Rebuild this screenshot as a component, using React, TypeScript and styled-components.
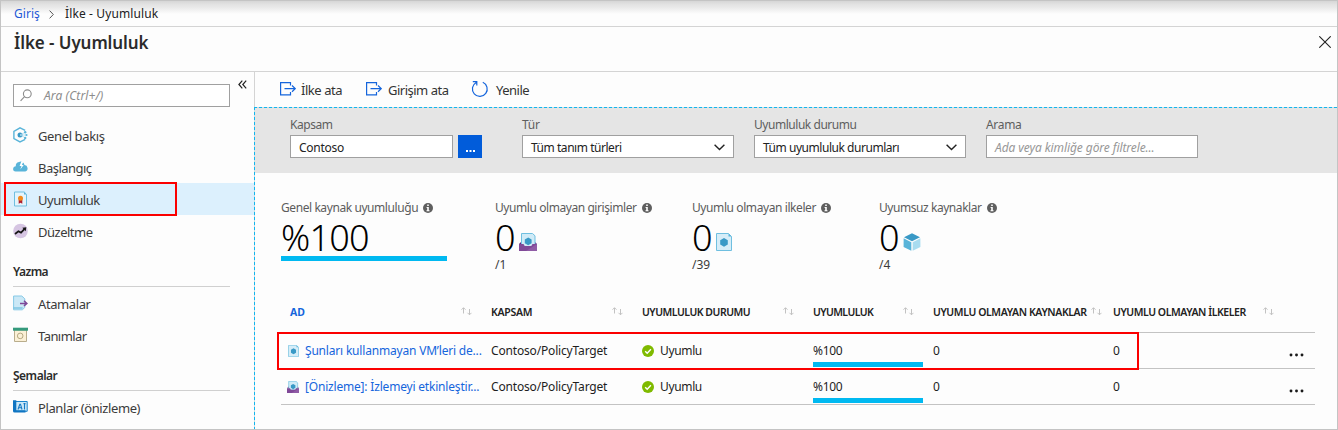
import React from 'react';
import styled, { createGlobalStyle, css } from 'styled-components';

const GlobalStyle = createGlobalStyle`
  *, *::before, *::after { box-sizing: border-box; }
  body { margin: 0; background: #fdfdfd; font-family: "Noto Sans", "Open Sans", sans-serif; font-size: 12px; color: #333; }
  svg { display: block; flex: none; }
`;

const Page = styled.div`
  width: 1338px;
  height: 430px;
  border: 1px solid #c4c4c4;
  background: #fdfdfd;
  display: flex;
  flex-direction: column;
  overflow: hidden;
`;

const Text = styled.span<{ $ls?: number }>`
  letter-spacing: ${(p) => p.$ls ?? 0}px;
  white-space: nowrap;
`;

const Breadcrumb = styled.nav`
  height: 26px;
  flex: none;
  display: flex;
  align-items: center;
  padding: 1px 0 0 13px;
  border-bottom: 1px solid #d4d4d4;
  background: linear-gradient(#d6d6d6, #e4e4e4 4px, #e8e8e8 6px, #fdfdfd 13px);
  line-height: 24px;
`;
const Home = styled(Text)`
  color: #1f59d6;
  width: 35px;
`;
const Crumb = styled(Text)`
  padding-left: 11px;
  color: #222;
`;

const TitleBar = styled.header`
  height: 45px;
  flex: none;
  display: flex;
  justify-content: space-between;
  padding: 4px 6px 0 13px;
  border-bottom: 1px solid #d4d4d4;
`;
const Title = styled.h1`
  margin: 0;
  font-size: 17px;
  font-weight: 600;
  line-height: 24px;
  letter-spacing: -0.08px;
  color: #2b2b2b;
`;
const CloseButton = styled.div`
  padding-top: 5px;
`;

const Body = styled.div`
  flex: 1;
  display: flex;
  min-height: 0;
`;

const Sidebar = styled.aside`
  width: 253px;
  flex: none;
  display: flex;
  flex-direction: column;
`;
const SearchRow = styled.div`
  display: flex;
  height: 47px;
  flex: none;
  padding: 12px 0 0 12px;
`;
const inputBox = css`
  height: 23px;
  border: 1px solid #a0a0a0;
  background: #fff;
  display: flex;
  align-items: center;
`;
const SearchBox = styled.div`
  ${inputBox}
  width: 217px;
  padding: 0 0 0 6px;
  gap: 12px;
  font-style: italic;
  color: #8c8c8c;
`;
const Collapse = styled.div`
  padding: 0 0 0 8px;
  margin-top: -4px;
`;
const NavItem = styled.div<{ $active?: boolean }>`
  position: relative;
  height: 32px;
  flex: none;
  display: flex;
  align-items: center;
  gap: 9px;
  padding: 2px 0 0 12px;
  font-size: 13px;
  color: #3b3b3b;
  background: ${(p) => (p.$active ? '#dcf0fd' : 'transparent')};
`;
const NavIcon = styled.span`
  width: 16px;
  height: 16px;
  flex: none;
  margin-top: -2px;
`;
const NavHeading = styled.div`
  flex: none;
  height: 40px;
  margin: 0 24px 0 12px;
  padding-top: 15px;
  line-height: 20px;
  font-weight: 600;
  color: #2b2b2b;
  border-bottom: 1px solid #d0d0d0;
`;
const Highlight = styled.div<{ $l: number; $t: number; $w: number; $h: number }>`
  position: absolute;
  left: ${(p) => p.$l}px;
  top: ${(p) => p.$t}px;
  width: ${(p) => p.$w}px;
  height: ${(p) => p.$h}px;
  border: 2px solid #fb0000;
  z-index: 2;
`;

const Main = styled.main`
  flex: 1;
  min-width: 0;
  display: flex;
  flex-direction: column;
`;
const Toolbar = styled.div`
  height: 35px;
  flex: none;
  display: flex;
  padding: 8px 0 0 25px;
  border-left: 1px solid #d4d4d4;
`;
const ToolButton = styled.div<{ $w: number; $gap?: number }>`
  width: ${(p) => p.$w}px;
  height: 20px;
  display: flex;
  gap: ${(p) => p.$gap ?? 5}px;
  font-size: 13px;
  line-height: 21px;
  color: #333;
`;
const Content = styled.section`
  flex: 1;
  padding: 1px 0 0 1px;
  background:
    repeating-linear-gradient(90deg, #12b6ee 0 3px, #c9dbe2 3px 5px) top / 100% 1px no-repeat,
    repeating-linear-gradient(180deg, #12b6ee 0 3px, #c9dbe2 3px 5px) left / 1px 100% no-repeat;
`;
const Filters = styled.div`
  height: 65px;
  display: flex;
  align-items: flex-start;
  padding: 7px 0 0 35px;
  background: #e5e5e5;
`;
const Field = styled.div<{ $mr: number }>`
  display: flex;
  flex-direction: column;
  margin-right: ${(p) => p.$mr}px;
`;
const FieldLabel = styled(Text)`
  height: 20px;
  line-height: 20px;
  color: #5e5e5e;
`;
const FieldLine = styled.div`
  display: flex;
  gap: 5px;
`;
const Input = styled.div<{ $w: number; $hint?: boolean }>`
  ${inputBox}
  width: ${(p) => p.$w}px;
  justify-content: space-between;
  padding: 1px 8px 0 8px;
  color: ${(p) => (p.$hint ? '#979797' : '#222')};
  font-style: ${(p) => (p.$hint ? 'italic' : 'normal')};
`;
const MoreButton = styled.div`
  width: 24px;
  height: 23px;
  background: #015cda;
  display: flex;
  align-items: flex-end;
  justify-content: center;
  padding-bottom: 6px;
`;

const Kpis = styled.div`
  display: flex;
  height: 122px;
  padding: 25px 0 0 26px;
`;
const Kpi = styled.div<{ $w: number }>`
  width: ${(p) => p.$w}px;
  display: flex;
  flex-direction: column;
`;
const KpiLabel = styled.div`
  display: flex;
  gap: 5px;
  height: 19px;
  line-height: 20px;
  color: #5c5c5c;
  svg { margin-top: 5px; }
`;
const KpiValue = styled.div`
  display: flex;
  align-items: flex-end;
  height: 39px;
  color: #000;
  font-size: 36px;
  font-weight: 300;
  line-height: 42px;
  svg { margin-bottom: 5px; }
`;
const KpiNumber = styled(Text)<{ $w: number }>`
  width: ${(p) => p.$w}px;
  height: 39px;
`;
const KpiTotal = styled(Text)`
  line-height: 20px;
  margin-top: -1px;
  color: #3b3b3b;
`;
const Bar = styled.div<{ $w: number }>`
  width: ${(p) => p.$w}px;
  height: 5px;
  flex: none;
  background: #00b9f1;
`;

const Table = styled.div`
  margin: 0 22px 0 26px;
`;
const TableRow = styled.div`
  position: relative;
  display: grid;
  grid-template-columns: 210px 151px 171px 120px 180px 1fr;
  height: 36px;
  border-bottom: 1px solid #c3c3c3;
  color: #1e1e1e;
`;
const TableHead = styled(TableRow)`
  height: 38px;
  font-size: 10.5px;
  font-weight: 600;
`;
const HeadCell = styled.div<{ $gap: number; $link?: boolean }>`
  display: flex;
  justify-content: space-between;
  padding: 7px ${(p) => p.$gap}px 0 ${(p) => (p.$link ? 9 : 0)}px;
  line-height: 20px;
  color: ${(p) => (p.$link ? '#1565dc' : '#222')};
  font-weight: ${(p) => (p.$link ? 700 : 600)};
  svg { margin-top: 5px; }
`;
const Cell = styled.div<{ $pl?: number; $gap?: number }>`
  display: flex;
  gap: ${(p) => p.$gap ?? 0}px;
  padding: 8px 0 0 ${(p) => p.$pl ?? 0}px;
  line-height: 20px;
`;
const Link = styled(Text)`
  color: #1565dc;
`;
const IconSlot = styled.span<{ $top: number }>`
  padding-top: ${(p) => p.$top}px;
`;
const BarCell = styled.div`
  display: flex;
  flex-direction: column;
  justify-content: space-between;
  padding: 8px 0 1px;
  line-height: 20px;
`;
const LastCell = styled(Cell)`
  justify-content: space-between;
  padding-right: 11px;
`;

const PolicyIcon = ({ w, h }: { w: number; h: number }) => (
  <svg width={w} height={h} viewBox="0 0 16 18">
    <path d="M.5.5h12l3 3v14H.5z" fill="#d6edf8" stroke="#6fbfe0" />
    <path d="M12.5.5v3h3z" fill="#59b4d9" />
    <path d="M8 5l3.8 2.2v4.3L8 13.700l-3.800-2.200V7.200z" fill="#3999c6" />
  </svg>
);
const InitiativeIcon = ({ w, h }: { w: number; h: number }) => (
  <svg width={w} height={h} viewBox="0 0 18 18">
    <path d="M0 11l3-3h12l3 3z" fill="#68217a" />
    <path d="M2.500.5h11l2.500 2.300v10.700h-13.500z" fill="#d0ebf7" stroke="#6fbfe0" />
    <path d="M9.200 4.500l3.400 2v3.800l-3.400 2-3.400-2V6.500z" fill="#3999c6" />
    <path d="M0 11h4.500l1.200 2h6.600l1.200-2H18v7H0z" fill="#804998" />
    <path d="M18 11v7H7z" fill="#a374b8" opacity=".45" />
  </svg>
);
const CubeIcon = () => (
  <svg width="18" height="18" viewBox="0 0 18 18">
    <path d="M9 .2l8 4.100-8 4-8-4z" fill="#3999c6" />
    <path d="M.6 5.300l7.700 3.900v8.600L.6 14z" fill="#59b4d9" />
    <path d="M17.400 5.300L9.700 9.200v8.600l7.700-3.800z" fill="#a8dcf0" />
  </svg>
);
const InfoIcon = () => (
  <svg width="10" height="10" viewBox="0 0 10 10">
    <circle cx="5" cy="5" r="5" fill="#5f5f5f" />
    <path d="M4.200 1.600h1.600v1.400H4.200zM3.600 4h2.200v3.200h.7v1H3.500v-1h.7V5h-.6z" fill="#fff" />
  </svg>
);
const CheckIcon = () => (
  <svg width="12" height="12" viewBox="0 0 12 12">
    <circle cx="6" cy="6" r="6" fill="#7fba00" />
    <path d="M3.200 6.200l2 2 3.700-4" fill="none" stroke="#fff" strokeWidth="1.400" />
  </svg>
);
const SortIcon = () => (
  <svg width="11" height="10" viewBox="0 0 11 10" fill="none" stroke="#c2c2c2">
    <path d="M2.500 6.500V.9M.5 2.700l2-2 2 2M8.500 2v5.800M6.500 5.800l2 2 2-2" />
  </svg>
);
const DotsIcon = () => (
  <svg width="15" height="4" viewBox="0 0 15 4" fill="#1a1a1a">
    <circle cx="2" cy="2" r="1.450" />
    <circle cx="7.500" cy="2" r="1.450" />
    <circle cx="13" cy="2" r="1.450" />
  </svg>
);
const ChevronDown = () => (
  <svg width="11" height="7" viewBox="0 0 11 7" fill="none" stroke="#222" strokeWidth="1.400">
    <path d="M.6.700l4.900 4.900L10.400.7" />
  </svg>
);
const AssignIcon = () => (
  <svg width="16" height="14" viewBox="0 0 16 14" fill="none" stroke="#1565dc" strokeWidth="1.200">
    <path d="M10.500 3.500V.6H.6v12.300h9.900V10M4.500 6.600h10.700M12 3.500l3.200 3.100L12 9.700" />
  </svg>
);
const RefreshIcon = () => (
  <svg width="18" height="18" viewBox="0 0 18 18" fill="none" stroke="#1565dc" strokeWidth="1.200">
    <path d="M11.800 2.200a7.400 7.400 0 1 1-6.600.3M1.800 1.600h4v4" />
  </svg>
);

const OverviewIcon = () => (
  <svg width="15" height="16" viewBox="0 0 15 16">
    <path d="M12.200 3.300L7 .9.900 4.300v7.200L7 14.900l5.200-2.500" fill="none" stroke="#59b4d9" strokeWidth="1.400" />
    <circle cx="7" cy="8" r="2.500" fill="#3999c6" />
    <path d="M7 8l5-2.700M7 8h6M7 8l5 2.700" stroke="#a8d8ee" strokeWidth=".8" />
    <g fill="#59b4d9"><circle cx="12.200" cy="5.200" r="1.200" /><circle cx="13.500" cy="8" r="1.100" /><circle cx="12.200" cy="10.900" r="1.200" /></g>
  </svg>
);
const CloudIcon = () => (
  <svg width="15" height="16" viewBox="0 0 15 16">
    <path d="M2.600 12.500a2.600 2.600 0 0 1 .2-5.200A4 4 0 0 1 6 2.900a4 4 0 0 1 5.500 3 3.400 3.400 0 0 1 .8 6.600z" fill="#59b4d9" />
    <path d="M8.300 2.500L6.600 6.900h1.900L7.300 10.400l3.400-4.500H8.900l1.500-3.400z" fill="#fff" />
  </svg>
);
const ComplianceIcon = () => (
  <svg width="15" height="16" viewBox="0 0 15 16">
    <path d="M1.500 1h9.700l2.300 2.300V15h-12z" fill="#e4f4fb" stroke="#6fbfe0" />
    <path d="M11 1v2.500h2.500z" fill="#59b4d9" />
    <path d="M5.700 8.500h3.600v4.300l-1.800-1-1.800 1z" fill="#b01e2e" />
    <circle cx="7.500" cy="7.300" r="2.500" fill="#f28a1c" />
  </svg>
);
const RemediationIcon = () => (
  <svg width="15" height="16" viewBox="0 0 15 16">
    <circle cx="7.500" cy="8" r="7.300" fill="#d6c5e2" />
    <path d="M2 11l3.400-2.700 2.600 1.300 3.600-3.800" fill="none" stroke="#151515" strokeWidth="1.700" />
    <path d="M9.300 4.700l4-.4-.5 3.900z" fill="#151515" />
  </svg>
);
const AssignmentsIcon = () => (
  <svg width="15" height="16" viewBox="0 0 15 16">
    <path d="M.6 1h8.200l3 2.800v8.700l-2.500 2.300H.6z" fill="#cbe8f6" stroke="#86c9e6" />
    <path d="M.6 13h9" stroke="#59b4d9" />
    <path d="M7 8.400h6.500M11 5.800l2.900 2.600L11 11" fill="none" stroke="#804998" strokeWidth="1.500" />
  </svg>
);
const DefinitionsIcon = () => (
  <svg width="15" height="16" viewBox="0 0 15 16">
    <path d="M1.500 3h12v11.500h-12z" fill="#fbf0d6" stroke="#b9ad8c" />
    <path d="M0 .7h15v3H0z" fill="#359a7c" />
    <circle cx="7.200" cy="8.900" r="2.800" fill="none" stroke="#b5a981" />
  </svg>
);
const BlueprintIcon = () => (
  <svg width="15" height="16" viewBox="0 0 15 16">
    <path d="M2.500 2.500h11.700v9.800H2.500z" fill="#cbe8f8" stroke="#1c85cc" />
    <path d="M0 1.300h3.300V12H0zM0 11.200h12.500v2.300H1.500A1.500 1.500 0 0 1 0 12z" fill="#0f75c2" />
    <path d="M5 10.500l1.800-5.300h.7L9 10.500M5.500 8.800h3M11.500 4.500v6M10.500 4.600h2" fill="none" stroke="#1478c4" strokeWidth="1.100" />
  </svg>
);

const Item = ({ icon, text, ls, children, active }: { icon: React.ReactNode; text: string; ls: number; children?: React.ReactNode; active?: boolean }) => (
  <NavItem $active={active}>
    <NavIcon>{icon}</NavIcon>
    <Text $ls={ls}>{text}</Text>
    {children}
  </NavItem>
);

const columns: { title: string; ls: number; gap: number; link?: boolean }[] = [
  { title: 'AD', ls: 0, gap: 19, link: true },
  { title: 'KAPSAM', ls: -0.3, gap: 19 },
  { title: 'UYUMLULUK DURUMU', ls: -0.49, gap: 19 },
  { title: 'UYUMLULUK', ls: -0.6, gap: 19 },
  { title: 'UYUMLU OLMAYAN KAYNAKLAR', ls: -0.4, gap: 11 },
  { title: 'UYUMLU OLMAYAN İLKELER', ls: -0.45, gap: 41 },
];

const counts = [
  { label: 'Uyumlu olmayan girişimler', ls: -0.43, w: 197, total: '/1', icon: <InitiativeIcon w={18} h={18} /> },
  { label: 'Uyumlu olmayan ilkeler', ls: -0.41, w: 187, total: '/39', icon: <PolicyIcon w={16} h={18} /> },
  { label: 'Uyumsuz kaynaklar', ls: -0.44, w: 160, total: '/4', icon: <CubeIcon /> },
];

const rows = [
  { name: 'Şunları kullanmayan VM’leri de...', ls: -0.19, pl: 7, gap: 6, icon: <PolicyIcon w={11} h={12} />, marked: true },
  { name: '[Önizleme]: İzlemeyi etkinleştir...', ls: -0.19, pl: 6, gap: 6, icon: <InitiativeIcon w={12} h={12} />, marked: false },
];

export default function App() {
  return (
    <Page>
      <GlobalStyle />
      <Breadcrumb>
        <Home $ls={0.05}>Giriş</Home>
        <svg width="5" height="9" viewBox="0 0 5 9" fill="none" stroke="#555"><path d="M.6.600l3.700 3.900L.6 8.400" /></svg>
        <Crumb $ls={0.12}>İlke - Uyumluluk</Crumb>
      </Breadcrumb>
      <TitleBar>
        <Title>İlke - Uyumluluk</Title>
        <CloseButton>
          <svg width="12" height="12" viewBox="0 0 12 12" stroke="#222" strokeWidth="1.100"><path d="M.3.300l11.400 11.400M11.700.3L.3 11.700" /></svg>
        </CloseButton>
      </TitleBar>
      <Body>
        <Sidebar>
          <SearchRow>
            <SearchBox>
              <svg width="12" height="13" viewBox="0 0 12 13" fill="none" stroke="#8c8c8c" strokeWidth="1.100"><circle cx="7.300" cy="4.800" r="3.900" /><path d="M4.500 7.700L.6 11.800" /></svg>
              <Text $ls={0.1}>Ara (Ctrl+/)</Text>
            </SearchBox>
            <Collapse>
              <svg width="9" height="9" viewBox="0 0 9 9" fill="none" stroke="#222" strokeWidth="1.200"><path d="M4.300.6L.9 4.500l3.400 3.900M8.200.6L4.800 4.500l3.400 3.900" /></svg>
            </Collapse>
          </SearchRow>
          <Item icon={<OverviewIcon />} text="Genel bakış" ls={-0.38} />
          <Item icon={<CloudIcon />} text="Başlangıç" ls={-0.52} />
          <Item icon={<ComplianceIcon />} text="Uyumluluk" ls={-0.48} active>
            <Highlight $l={3} $t={-1} $w={173} $h={34} />
          </Item>
          <Item icon={<RemediationIcon />} text="Düzeltme" ls={-0.5} />
          <NavHeading><Text $ls={-0.6}>Yazma</Text></NavHeading>
          <Item icon={<AssignmentsIcon />} text="Atamalar" ls={-0.4} />
          <Item icon={<DefinitionsIcon />} text="Tanımlar" ls={-0.55} />
          <NavHeading><Text $ls={-0.5}>Şemalar</Text></NavHeading>
          <Item icon={<BlueprintIcon />} text="Planlar (önizleme)" ls={-0.4} />
        </Sidebar>
        <Main>
          <Toolbar>
            <ToolButton $w={86}><IconSlot $top={2}><AssignIcon /></IconSlot><Text $ls={-0.45}>İlke ata</Text></ToolButton>
            <ToolButton $w={105} $gap={6}><IconSlot $top={2}><AssignIcon /></IconSlot><Text $ls={-0.5}>Girişim ata</Text></ToolButton>
            <ToolButton $w={80} $gap={7}><IconSlot $top={0}><RefreshIcon /></IconSlot><Text $ls={-0.5}>Yenile</Text></ToolButton>
          </Toolbar>
          <Content>
            <Filters>
              <Field $mr={40}>
                <FieldLabel $ls={-0.46}>Kapsam</FieldLabel>
                <FieldLine>
                  <Input $w={163}><Text $ls={-0.27}>Contoso</Text></Input>
                  <MoreButton>
                    <svg width="9" height="2" viewBox="0 0 9 2" fill="#fff"><path d="M0 0h2v2H0zM3.500 0h2v2h-2zM7 0h2v2H7z" /></svg>
                  </MoreButton>
                </FieldLine>
              </Field>
              <Field $mr={20}>
                <FieldLabel $ls={-0.2}>Tür</FieldLabel>
                <Input $w={212}><Text $ls={-0.46}>Tüm tanım türleri</Text><ChevronDown /></Input>
              </Field>
              <Field $mr={20}>
                <FieldLabel $ls={-0.46}>Uyumluluk durumu</FieldLabel>
                <Input $w={212}><Text $ls={-0.46}>Tüm uyumluluk durumları</Text><ChevronDown /></Input>
              </Field>
              <Field $mr={0}>
                <FieldLabel $ls={-0.31}>Arama</FieldLabel>
                <Input $w={212} $hint><Text $ls={-0.09}>Ada veya kimliğe göre filtrele...</Text></Input>
              </Field>
            </Filters>
            <Kpis>
              <Kpi $w={214}>
                <KpiLabel><Text $ls={-0.42}>Genel kaynak uyumluluğu</Text><InfoIcon /></KpiLabel>
                <KpiValue><KpiNumber $w={100} $ls={-0.8}>%100</KpiNumber></KpiValue>
                <Bar $w={166} />
              </Kpi>
              {counts.map((c) => (
                <Kpi key={c.label} $w={c.w}>
                  <KpiLabel><Text $ls={c.ls}>{c.label}</Text><InfoIcon /></KpiLabel>
                  <KpiValue><KpiNumber $w={24}>0</KpiNumber>{c.icon}</KpiValue>
                  <KpiTotal>{c.total}</KpiTotal>
                </Kpi>
              ))}
            </Kpis>
            <Table>
              <TableHead>
                {columns.map((c) => (
                  <HeadCell key={c.title} $gap={c.gap} $link={c.link}>
                    <Text $ls={c.ls}>{c.title}</Text>
                    <SortIcon />
                  </HeadCell>
                ))}
              </TableHead>
              {rows.map((r) => (
                <TableRow key={r.name}>
                  <Cell $pl={r.pl} $gap={r.gap}><IconSlot $top={4}>{r.icon}</IconSlot><Link $ls={r.ls}>{r.name}</Link></Cell>
                  <Cell><Text $ls={-0.17}>Contoso/PolicyTarget</Text></Cell>
                  <Cell $gap={6}><IconSlot $top={4}><CheckIcon /></IconSlot><Text $ls={-0.35}>Uyumlu</Text></Cell>
                  <BarCell><Text $ls={-0.3}>%100</Text><Bar $w={110} /></BarCell>
                  <Cell>0</Cell>
                  <LastCell><span>0</span><IconSlot $top={12}><DotsIcon /></IconSlot></LastCell>
                  {r.marked && <Highlight $l={-4} $t={-1} $w={862} $h={38} />}
                </TableRow>
              ))}
            </Table>
          </Content>
        </Main>
      </Body>
    </Page>
  );
}
